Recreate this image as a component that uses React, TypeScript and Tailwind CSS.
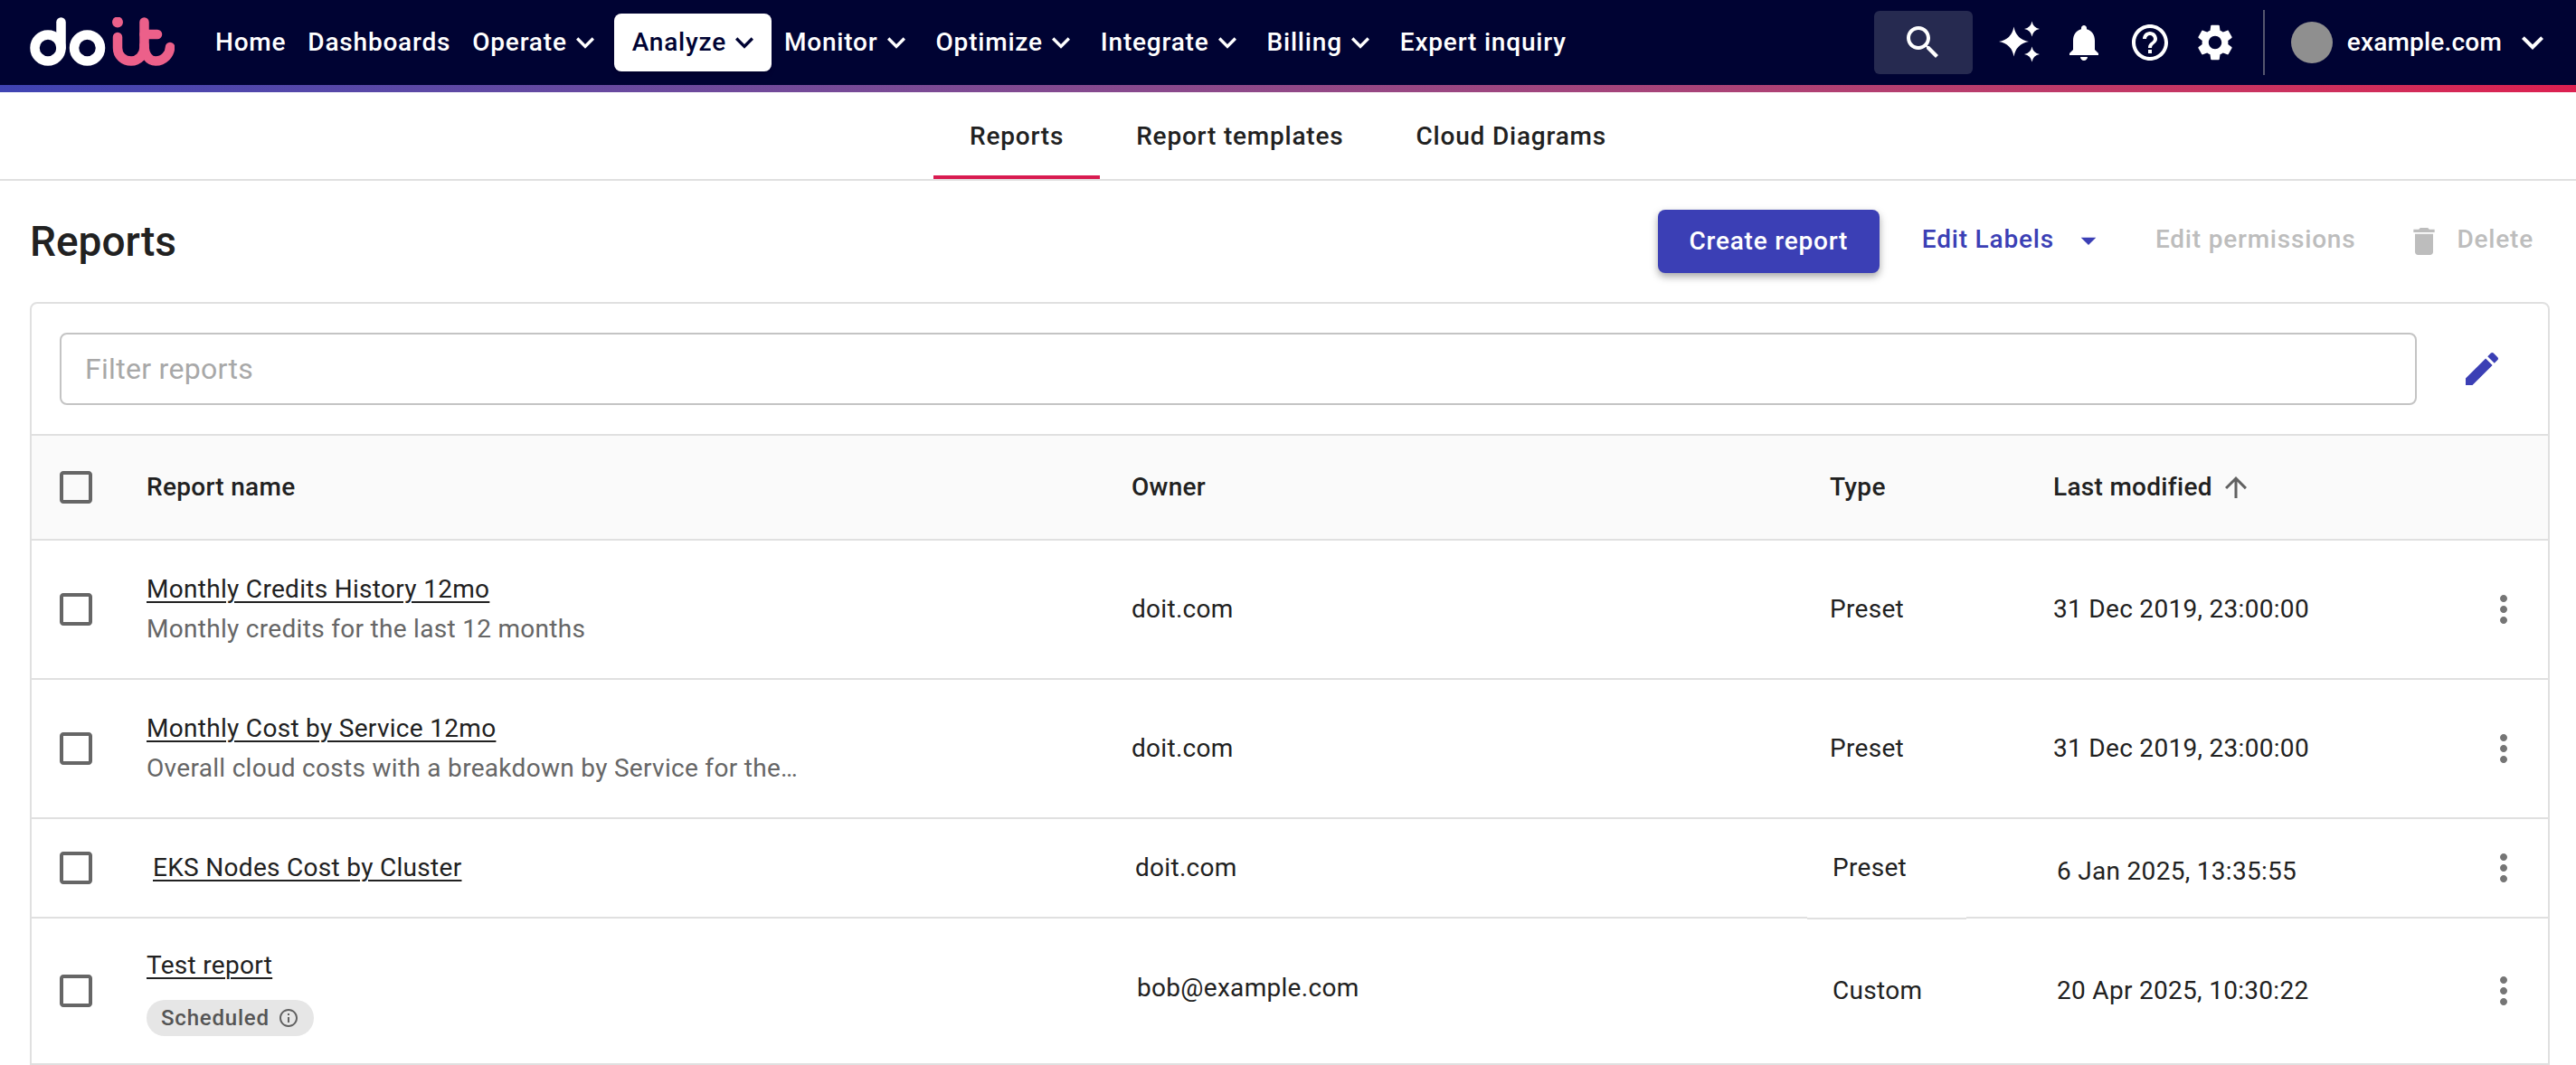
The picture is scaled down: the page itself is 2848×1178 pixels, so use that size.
import type { ReactNode } from "react";

const ICONS = {
  search:
    "M15.5 14h-.79l-.28-.27C15.41 12.59 16 11.11 16 9.5 16 5.91 13.09 3 9.5 3S3 5.91 3 9.5 5.91 16 9.5 16c1.61 0 3.09-.59 4.23-1.57l.27.28v.79l5 4.99L20.49 19l-4.99-5zm-6 0C7.01 14 5 11.99 5 9.5S7.01 5 9.5 5 14 7.01 14 9.5 11.99 14 9.5 14z",
  bell: "M12 22c1.1 0 2-.9 2-2h-4c0 1.1.89 2 2 2zm6-6v-5c0-3.07-1.64-5.64-4.5-6.32V4c0-.83-.67-1.5-1.5-1.5s-1.5.67-1.5 1.5v.68C7.63 5.36 6 7.92 6 11v5l-2 2v1h16v-1l-2-2z",
  help: "M11 18h2v-2h-2v2zm1-16C6.48 2 2 6.48 2 12s4.48 10 10 10 10-4.48 10-10S17.52 2 12 2zm0 18c-4.41 0-8-3.59-8-8s3.59-8 8-8 8 3.59 8 8-3.59 8-8 8zm0-14c-2.21 0-4 1.79-4 4h2c0-1.1.9-2 2-2s2 .9 2 2c0 2-3 1.75-3 5h2c0-2.25 3-2.5 3-5 0-2.21-1.79-4-4-4z",
  settings:
    "M19.14 12.94c.04-.3.06-.61.06-.94 0-.32-.02-.64-.07-.94l2.03-1.58c.18-.14.23-.41.12-.61l-1.92-3.32c-.12-.22-.37-.29-.59-.22l-2.39.96c-.5-.38-1.03-.7-1.62-.94l-.36-2.54c-.04-.24-.24-.41-.48-.41h-3.84c-.24 0-.43.17-.47.41l-.36 2.54c-.59.24-1.13.57-1.62.94l-2.39-.96c-.22-.08-.47 0-.59.22L2.74 8.87c-.12.21-.08.47.12.61l2.03 1.58c-.05.3-.09.63-.09.94s.02.64.07.94l-2.03 1.58c-.18.14-.23.41-.12.61l1.92 3.32c.12.22.37.29.59.22l2.39-.96c.5.38 1.03.7 1.62.94l.36 2.54c.05.24.24.41.48.41h3.84c.24 0 .44-.17.47-.41l.36-2.54c.59-.24 1.13-.56 1.62-.94l2.39.96c.22.08.47 0 .59-.22l1.92-3.32c.12-.22.07-.47-.12-.61l-2.01-1.58zM12 15.6c-1.98 0-3.6-1.62-3.6-3.6s1.62-3.6 3.6-3.6 3.6 1.62 3.6 3.6-1.62 3.6-3.6 3.6z",
  sparkles:
    "M9.25 3.25Q10.5 10.25 17.5 11.5 10.5 12.75 9.25 19.75 8 12.75 1 11.5 8 10.25 9.25 3.25ZM19.25 .25Q19.9 3.85 23.5 4.5 19.9 5.15 19.25 8.75 18.6 5.15 15 4.5 18.6 3.85 19.25 .25ZM19.25 14.25Q19.9 17.85 23.5 18.5 19.9 19.15 19.25 22.75 18.6 19.15 15 18.5 18.6 17.85 19.25 14.25Z",
  edit: "M3 17.25V21h3.75L17.81 9.94l-3.75-3.75L3 17.25zM20.71 7.04c.39-.39.39-1.02 0-1.41l-2.34-2.34c-.39-.39-1.02-.39-1.41 0l-1.83 1.83 3.75 3.75 1.83-1.83z",
  trash: "M6 19c0 1.1.9 2 2 2h8c1.1 0 2-.9 2-2V7H6v12zM19 4h-3.5l-1-1h-5l-1 1H5v2h14V4z",
  dropdown: "M7 10l5 5 5-5z",
  up: "M4 12l1.41 1.41L11 7.83V20h2V7.83l5.58 5.59L20 12l-8-8-8 8z",
  more: "M12 8c1.1 0 2-.9 2-2s-.9-2-2-2-2 .9-2 2 .9 2 2 2zm0 2c-1.1 0-2 .9-2 2s.9 2 2 2 2-.9 2-2-.9-2-2-2zm0 6c-1.1 0-2 .9-2 2s.9 2 2 2 2-.9 2-2-.9-2-2-2z",
  info: "M11 7h2v2h-2zm0 4h2v6h-2zm1-9C6.48 2 2 6.48 2 12s4.48 10 10 10 10-4.48 10-10S17.52 2 12 2zm0 18c-4.41 0-8-3.59-8-8s3.59-8 8-8 8 3.59 8 8-3.59 8-8 8z",
  chevron: "M7.41 8.59 12 13.17l4.59-4.58L18 10l-6 6-6-6 1.41-1.41z",
  box: "M19 5v14H5V5h14m0-2H5c-1.1 0-2 .9-2 2v14c0 1.1.9 2 2 2h14c1.1 0 2-.9 2-2V5c0-1.1-.9-2-2-2z",
};

function Icon({ name, className }: { name: keyof typeof ICONS; className: string }) {
  return (
    <svg viewBox="0 0 24 24" fill="currentColor" className={"shrink-0 " + className}>
      <path d={ICONS[name]} />
    </svg>
  );
}

function Logo() {
  return (
    <svg viewBox="0 0 160 54" fill="none" strokeWidth={10.5} strokeLinecap="round" className="h-[54px] w-[160px] shrink-0">
      <g stroke="#ffffff">
        <circle cx="20" cy="34" r="14.5" />
        <path d="M34.5 34V5.5" />
        <circle cx="63.5" cy="34" r="14.5" />
      </g>
      <circle cx="97" cy="5.5" r="6" fill="#ec608a" />
      <g stroke="#ec608a" strokeLinejoin="round">
        <path d="M97 22V34C97 43 104 48.5 112 48.5C120 48.5 126.5 42 126.5 33V5.5" />
        <path d="M126.5 19H141" />
        <path d="M126.5 31C126.5 42 132 48.5 139 48.5C148 48.5 155 41 155 33" />
      </g>
    </svg>
  );
}

const NAV = [
  { label: "Home", cls: "pl-[12px] pr-[12px]" },
  { label: "Dashboards", cls: "pl-[12px] pr-[12px]" },
  { label: "Operate", caret: true, cls: "px-[12px]" },
  { label: "Analyze", caret: true, active: true, cls: "pl-[20px] pr-[10px]" },
  { label: "Monitor", caret: true, cls: "pl-[14px] pr-[12px]" },
  { label: "Optimize", caret: true, cls: "px-[12px]" },
  { label: "Integrate", caret: true, cls: "px-[12px]" },
  { label: "Billing", caret: true, cls: "px-[12px]" },
  { label: "Expert inquiry", cls: "pl-[12px] pr-[14px]" },
];

function TopBar() {
  return (
    <div>
      <div className="flex h-[94px] items-center bg-[#000333] pl-[33px] pr-[24px] text-white">
        <div className="mr-[-7px] mt-[-2px]">
          <Logo />
        </div>
        <div className="ml-[40px] flex items-center">
          {NAV.map((n) => (
            <div
              key={n.label}
              className={
                "flex h-[64px] items-center rounded-[8px] text-[28px] font-medium tracking-[0.8px] " +
                n.cls +
                (n.active ? " bg-white text-[#000333] shadow-md" : "")
              }
            >
              {n.label}
              {n.caret && <Icon name="chevron" className="h-[40px] w-[40px]" />}
            </div>
          ))}
        </div>
        <div className="ml-auto flex h-[70px] w-[109px] items-center justify-center rounded-[6px] bg-[#262a50]">
          <Icon name="search" className="h-[48px] w-[48px]" />
        </div>
        <Icon name="sparkles" className="ml-[27px] h-[48px] w-[48px]" />
        <Icon name="bell" className="ml-[24px] h-[48px] w-[48px]" />
        <Icon name="help" className="ml-[25px] h-[48px] w-[48px]" />
        <Icon name="settings" className="ml-[24px] h-[48px] w-[48px]" />
        <div className="ml-[29px] h-[72px] w-[2px] bg-[#55566f]" />
        <div className="ml-[29px] h-[46px] w-[46px] rounded-full bg-[#8f8f8f]" />
        <span className="ml-[16px] text-[28px] font-medium tracking-[0.2px]">example.com</span>
        <Icon name="chevron" className="ml-[10px] h-[48px] w-[48px]" />
      </div>
      <div className="h-[8px] bg-gradient-to-r from-[#3f43b3] to-[#dc1f50]" />
    </div>
  );
}

function Tabs() {
  const tabs = ["Reports", "Report templates", "Cloud Diagrams"];
  return (
    <div className="flex h-[98px] justify-center border-b-2 border-[#e0e0e0]">
      {tabs.map((t, i) => (
        <div
          key={t}
          className={
            "flex h-[96px] items-center border-b-4 px-[40px] pt-[6px] text-[28px] font-medium tracking-[0.8px] text-[#212121] " +
            (i === 0 ? "border-[#d81b50]" : "border-transparent")
          }
        >
          {t}
        </div>
      ))}
    </div>
  );
}

function Header() {
  return (
    <div className="flex h-[134px] items-center pl-[33px] pr-[47px]">
      <h1 className="text-[46px] font-medium text-[#212121]">Reports</h1>
      <button className="ml-auto flex h-[70px] w-[245px] items-center justify-center rounded-[8px] bg-[#3b3fb5] text-[28px] font-medium tracking-[0.8px] text-white shadow-[0_4px_8px_rgba(0,0,0,0.35)]">
        Create report
      </button>
      <span className="ml-[47px] mb-[4px] text-[28px] font-medium tracking-[0.8px] text-[#3b3fb5]">Edit Labels</span>
      <Icon name="dropdown" className="ml-[18px] mb-[2px] h-[40px] w-[40px] text-[#3b3fb5]" />
      <span className="ml-[54px] mb-[4px] text-[28px] font-medium tracking-[0.8px] text-[#bdbdbd]">Edit permissions</span>
      <Icon name="trash" className="ml-[56px] h-[40px] w-[40px] text-[#bdbdbd]" />
      <span className="ml-[16px] mb-[4px] text-[28px] font-medium tracking-[0.8px] text-[#bdbdbd]">Delete</span>
    </div>
  );
}

const GRID = "grid grid-cols-[25px_48px_54px_1089px_772px_247px_474px_48px] items-center";

function HeaderRow() {
  return (
    <div className={GRID + " h-[116px] border-b-2 border-[#e0e0e0] bg-[#fafafa] text-[28px] font-medium tracking-[0.3px] text-[#212121]"}>
      <span />
      <Icon name="box" className="h-[48px] w-[48px] text-[#666666]" />
      <span />
      <span>Report name</span>
      <span>Owner</span>
      <span>Type</span>
      <span className="flex items-center">
        Last modified
        <Icon name="up" className="ml-[8px] h-[36px] w-[36px] text-[#616161]" />
      </span>
      <span />
    </div>
  );
}

type RowProps = {
  h: string;
  name: ReactNode;
  owner: string;
  type: string;
  date: string;
  ownerCls?: string;
  typeCls?: string;
  dateCls?: string;
  extra?: ReactNode;
};

function Row({ h, name, owner, type, date, ownerCls = "", typeCls = "", dateCls = "", extra }: RowProps) {
  return (
    <div className={GRID + " relative border-b-2 border-[#e0e0e0] text-[28px] tracking-[0.3px] text-[#212121] " + h}>
      <span />
      <Icon name="box" className="h-[48px] w-[48px] text-[#666666]" />
      <span />
      <div>{name}</div>
      <span className={ownerCls}>{owner}</span>
      <span className={typeCls}>{type}</span>
      <span className={dateCls}>{date}</span>
      <Icon name="more" className="h-[48px] w-[48px] text-[#757575]" />
      {extra}
    </div>
  );
}

function Title({ text, cls = "" }: { text: string; cls?: string }) {
  return <div className={"leading-[44px] underline decoration-2 underline-offset-[4px] " + cls}>{text}</div>;
}

function Table() {
  return (
    <div className="ml-[33px] w-[2786px] rounded-t-[8px] border-2 border-[#e0e0e0]">
      <div className="flex h-[146px] items-center border-b-2 border-[#e0e0e0] pl-[31px]">
        <div className="flex h-[80px] w-[2606px] items-center rounded-[8px] border-2 border-[#c4c4c4] pl-[26px] text-[32px] tracking-[0.3px] text-[#a8a8a8]">
          Filter reports
        </div>
        <Icon name="edit" className="ml-[48px] h-[48px] w-[48px] text-[#3b3fb5]" />
      </div>
      <HeaderRow />
      <Row
        h="h-[154px]"
        name={
          <div>
            <Title text="Monthly Credits History 12mo" />
            <div className="leading-[44px] text-[#666666]">Monthly credits for the last 12 months</div>
          </div>
        }
        owner="doit.com"
        type="Preset"
        date="31 Dec 2019, 23:00:00"
      />
      <Row
        h="h-[154px]"
        name={
          <div>
            <Title text="Monthly Cost by Service 12mo" />
            <div className="leading-[44px] text-[#666666]">Overall cloud costs with a breakdown by Service for the…</div>
          </div>
        }
        owner="doit.com"
        type="Preset"
        date="31 Dec 2019, 23:00:00"
      />
      <Row
        h="h-[110px]"
        name={<Title text="EKS Nodes Cost by Cluster" cls="pl-[7px]" />}
        owner="doit.com"
        type="Preset"
        date="6 Jan 2025, 13:35:55"
        ownerCls="pl-[4px]"
        typeCls="pl-[3px]"
        dateCls="pl-[4px] pt-[8px]"
        extra={
          <span className="absolute bottom-[-3px] left-[1963px] h-[3px] w-[176px] border-t border-white bg-[#e0e0e0]" />
        }
      />
      <Row
        h="h-[162px]"
        name={
          <div>
            <Title text="Test report" />
            <div className="mt-[16px] flex h-[40px] w-[185px] items-center rounded-full bg-[#e6e6e6] pl-[16px] text-[24px] font-medium tracking-[0.8px] text-[#555555]">
              Scheduled
              <Icon name="info" className="ml-[9px] h-[24px] w-[24px] text-[#616161]" />
            </div>
          </div>
        }
        owner="bob@example.com"
        type="Custom"
        date="20 Apr 2025, 10:30:22"
        ownerCls="pl-[6px] pb-[6px]"
        typeCls="pl-[3px]"
        dateCls="pl-[4px]"
      />
    </div>
  );
}

export default function App() {
  return (
    <div className="h-[1178px] w-[2848px] overflow-hidden bg-white font-['Roboto',sans-serif]">
      <TopBar />
      <Tabs />
      <Header />
      <Table />
    </div>
  );
}
